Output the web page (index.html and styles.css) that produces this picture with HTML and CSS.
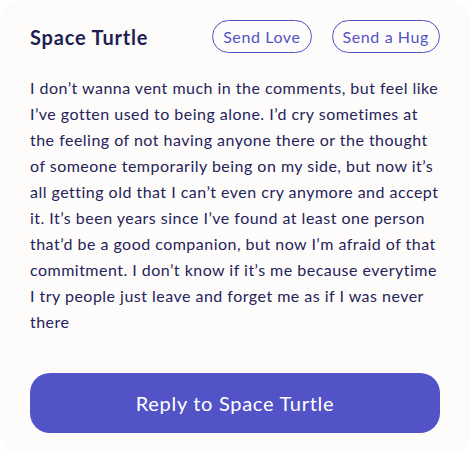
FILE: index.html
```html
<!DOCTYPE html>
<html>
<head>
<meta charset="utf-8">
<link rel="stylesheet" href="styles.css">
</head>
<body>
<div class="card">
  <div class="header">
    <h2 class="name">Space Turtle</h2>
    <div class="actions">
      <button class="pill">Send Love</button>
      <button class="pill">Send a Hug</button>
    </div>
  </div>
  <p class="post">I don’t wanna vent much in the comments, but feel like<br>I’ve gotten used to being alone. I’d cry sometimes at<br>the feeling of not having anyone there or the thought<br>of someone temporarily being on my side, but now it’s<br>all getting old that I can’t even cry anymore and accept<br>it. It’s been years since I’ve found at least one person<br>that’d be a good companion, but now I’m afraid of that<br>commitment. I don’t know if it’s me because everytime<br>I try people just leave and forget me as if I was never<br>there</p>
  <button class="reply">Reply to Space Turtle</button>
</div>
</body>
</html>
```

FILE: styles.css
```css
html, body {
  margin: 0;
  padding: 0;
  background: #ffffff;
}
body {
  font-family: "Lato", "Open Sans", sans-serif;
  width: 470px;
  height: 453px;
}
.card {
  box-sizing: border-box;
  width: 470px;
  height: 453px;
  background: #fdfcfb;
  border-radius: 20px;
  padding: 20px 30px 20px 30px;
  display: flex;
  flex-direction: column;
}
.header {
  display: flex;
  align-items: center;
  justify-content: space-between;
  height: 33px;
}
.name {
  margin: 0;
  font-size: 20px;
  font-weight: 700;
  letter-spacing: 0.8px;
  color: #211f52;
}
.actions {
  display: flex;
  gap: 20px;
}
.pill {
  font-family: inherit;
  font-size: 16px;
  letter-spacing: 0.6px;
  color: #5353c7;
  background: transparent;
  border: 1px solid #5353c7;
  border-radius: 17px;
  height: 33px;
  padding: 0 10px;
  line-height: 31px;
}
.post {
  margin: 22px 0 0 0;
  font-size: 16px;
  line-height: 26px;
  letter-spacing: 0.48px;
  color: #25235a;
  white-space: nowrap;
}
.reply {
  margin-top: auto;
  height: 60px;
  width: 410px;
  border: none;
  border-radius: 20px;
  background: #5353c8;
  color: #ffffff;
  font-family: inherit;
  font-size: 20px;
  letter-spacing: 0.7px;
}
```
